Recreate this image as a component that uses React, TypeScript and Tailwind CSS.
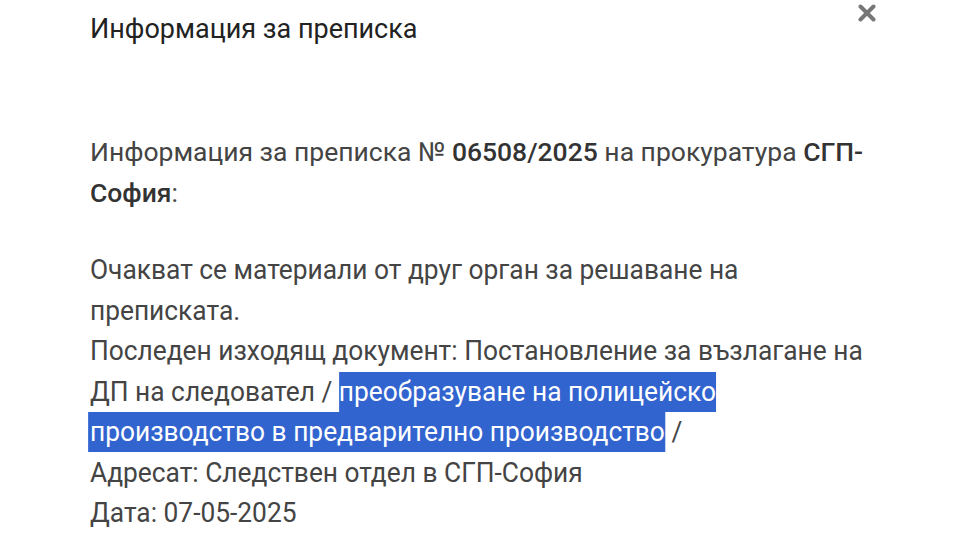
import React from "react";

const Line = ({ children }: { children: React.ReactNode }) => (
  <div className="h-[40.5px] leading-[40.5px] whitespace-nowrap">
    <span className="inline-block origin-left scale-x-[0.94]">{children}</span>
  </div>
);

export default function App() {
  return (
    <div className="relative w-[958px] h-[539px] bg-white overflow-hidden" style={{ fontFamily: "Roboto, 'Noto Sans', sans-serif" }}>
      <button className="absolute left-[858px] top-[4px] w-[18px] h-[18px]" aria-label="close">
        <svg viewBox="0 0 18 18" className="w-[18px] h-[18px]">
          <path d="M2.5 2.5 L15.5 15.5 M15.5 2.5 L2.5 15.5" stroke="#777" strokeWidth="4" strokeLinecap="round" />
        </svg>
      </button>
      <div className="pl-[90px] pr-[60px] pt-[9px]">
        <h1 className="text-[27px] leading-[40px] text-[#222] font-normal">Информация за преписка</h1>
        <div className="mt-[82px] text-[26.5px] leading-[41px] text-[#444]">
          <p className="w-[790px]">
            Информация за преписка № <span className="font-medium text-[#333]">06508/2025</span> на прокуратура <span className="font-medium text-[#333]">СГП-София</span>:
          </p>
        </div>
        <div className="mt-[37px] text-[28px] text-[#444]">
          <Line>Очакват се материали от друг орган за решаване на</Line>
          <Line>преписката.</Line>
          <Line>Последен изходящ документ: Постановление за възлагане на</Line>
          <Line>
            ДП на следовател /{" "}
            <span className="inline-block align-top leading-[39.5px] mt-[0.5px] bg-[#3264d0] text-white">преобразуване на полицейско</span>
          </Line>
          <Line>
            <span className="inline-block align-top leading-[39.5px] bg-[#3264d0] text-white -ml-[2px] pl-[2px]">производство в предварително производство</span> /
          </Line>
          <Line>Адресат: Следствен отдел в СГП-София</Line>
          <Line>Дата: 07-05-2025</Line>
        </div>
      </div>
    </div>
  );
}
